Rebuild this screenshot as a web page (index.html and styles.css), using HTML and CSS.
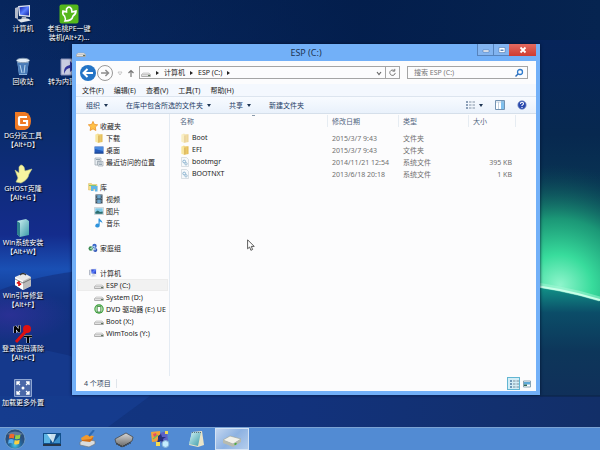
FILE: index.html
```html
<!DOCTYPE html>
<html lang="zh">
<head>
    <meta charset="UTF-8">
    <meta name="viewport" content="width=device-width, initial-scale=1.0">
    <title>ESP (C:)</title>
    <link rel="stylesheet" href="styles.css">
</head>
<body>
    <svg class="symbols" aria-hidden="true">
        <defs>
            <linearGradient id="gFolder" x1="0" x2="1"><stop offset="0" stop-color="#fdf0b0"/><stop offset="1" stop-color="#e2b84e"/></linearGradient>
            <linearGradient id="gScreen" x1="0" y1="0" x2="1" y2="1"><stop offset="0" stop-color="#0a18a8"/><stop offset=".5" stop-color="#5a80ff"/><stop offset="1" stop-color="#1020a0"/></linearGradient>
            <linearGradient id="gGlass" x1="0" y1="0" x2="1" y2="1"><stop offset="0" stop-color="#d5f5f5"/><stop offset="1" stop-color="#3a9aa8"/></linearGradient>
            <linearGradient id="gChip" x1="0" y1="0" x2="0" y2="1"><stop offset="0" stop-color="#d8d8d8"/><stop offset="1" stop-color="#666"/></linearGradient>
        </defs>
        <symbol id="drive" viewBox="0 0 10 10">
            <path d="M2 5h6l1.500 1.500v2h-9v-2z" fill="#e9e9e9" stroke="#a5a5a5" stroke-width=".5"/>
            <path d="M.6 6.500h8.800v2.200H.6z" fill="#999"/><path d="M1 6.800h6v1.300H1z" fill="#e2e2e2"/><path d="M7.300 6.900h1.500v1H7.300z" fill="#4c6b4c"/>
        </symbol>
        <symbol id="folder" viewBox="0 0 10 10">
            <path d="M1.500 1.500L4 .5l1 .8h3.500V9l-4 .7-3-1z" fill="url(#gFolder)"/>
            <path d="M1.500 1.500l3 1v7.200l-3-1z" fill="#f8e6a0"/><path d="M4.500 2.500h.8v7l-.8.200z" fill="#c99a38"/>
        </symbol>
        <symbol id="sysfile" viewBox="0 0 10 10">
            <path d="M1.500.5h5l2 2v7h-7z" fill="#f6f9fb" stroke="#c3ccd4" stroke-width=".6"/>
            <circle cx="4.200" cy="4.500" r="1.400" fill="none" stroke="#8cb4d2"/><circle cx="6" cy="6.800" r="1.200" fill="none" stroke="#9dbdd4"/>
        </symbol>
        <symbol id="star" viewBox="0 0 10 10"><path d="M5 .4l1.400 3 3.300.4-2.400 2.300.6 3.400L5 7.900 2.100 9.500l.6-3.400L.3 3.800l3.300-.4z" fill="#ffc148" stroke="#e88a1c" stroke-width=".7"/></symbol>
        <symbol id="desk" viewBox="0 0 10 10"><path d="M.5 1.500h9v7h-9z" fill="#2459b8"/><path d="M1 2h8v4L1 4z" fill="#4a8be0"/><path d="M.5 7.700h9v.8h-9z" fill="#163875"/></symbol>
        <symbol id="recent" viewBox="0 0 10 10"><path d="M1 1h6v3H3.500v4H1zM4 4.500h5V9H4z" fill="#e8edf1" stroke="#98a4ae" stroke-width=".7"/><path d="M2 2.500h4M5 6h3M5 7.500h3" stroke="#728796" stroke-width=".7"/></symbol>
        <symbol id="library" viewBox="0 0 10 10"><path d="M.5 1.500h3l.7 1H9v5.500H.5z" fill="#f6dc86" stroke="#d5b04c" stroke-width=".4"/><path d="M3 4h6.500v5.500H7V7H5.500v2H3z" fill="#62b5e8"/><path d="M1 3h7v1H1z" fill="#82c47a"/></symbol>
        <symbol id="video" viewBox="0 0 10 10"><path d="M1.500.5h7v9h-7z" fill="#2d3e4c"/><path d="M3.200 1h3.600v3.500H3.200zM3.200 5.500h3.600V9H3.200z" fill="#6ca5cc"/><path d="M2.300 1v8.500M7.700 1v8.500" stroke="#c3d1da" stroke-width=".7" stroke-dasharray=".8 .8"/></symbol>
        <symbol id="photo" viewBox="0 0 10 10"><path d="M.5 1.500h9v7h-9z" fill="#eef3f5" stroke="#aab6bd" stroke-width=".5"/><path d="M1.300 2.300h7.400v5.400H1.300z" fill="#7fc8e6"/><path d="M1.300 6l2.500-1.500L6 6l2.700-.5v2.200H1.300z" fill="#2f6c6c"/></symbol>
        <symbol id="music" viewBox="0 0 10 10"><path d="M4.500.5h1.200c.3 1.700 3 2 2.600 5-.6-1.500-1.500-1.800-2.600-1.900V7.500a2.200 2 0 1 1-1.200-1.700z" fill="#2e93dc"/></symbol>
        <symbol id="homegroup" viewBox="0 0 10 10"><circle cx="6.500" cy="3" r="2.200" fill="#3a66c8"/><circle cx="2.800" cy="5.500" r="2.300" fill="#3d8b54"/><circle cx="7.300" cy="7" r="2" fill="#3458b8"/><path d="M2.500 5.500l4-2.500.8 4z" fill="none" stroke="#dff" stroke-width=".7"/></symbol>
        <symbol id="pc" viewBox="0 0 20 20">
            <path d="M2 4l3-1v12l-3-1z" fill="#b3bac8"/><path d="M5 2l12-1v12L6 12z" fill="#dfe4ee"/>
            <path d="M6.500 3.200L16 2.300v9.300l-8.800-.8z" fill="url(#gScreen)"/>
            <path d="M9 13h4l1 2.500H8z" fill="#aeb4c0"/><path d="M4 15.500l11-1 3 2-10 2z" fill="#e2e6ec"/>
        </symbol>
        <symbol id="dvd" viewBox="0 0 10 10"><circle cx="5" cy="5" r="4.700" fill="#369c36"/><circle cx="5" cy="5" r="3.600" fill="#cdebc6"/><path d="M3.200 2.500h3.600v5.500H3.200z" fill="#fff" stroke="#2c7c30" stroke-width=".8"/></symbol>
    </svg>

    <main class="desktop">
        <svg class="wallpaper" viewBox="0 0 600 427" preserveAspectRatio="none" aria-hidden="true">
            <defs>
                <linearGradient id="sky" x1="0" y1="0" x2="0" y2="1">
                    <stop offset="0" stop-color="#07265d"/><stop offset=".3" stop-color="#0a2c6c"/><stop offset=".55" stop-color="#142c8c"/><stop offset=".63" stop-color="#1a50b4"/><stop offset=".7" stop-color="#123a92"/><stop offset="1" stop-color="#123682"/>
                </linearGradient>
                <linearGradient id="dusk" x1="0" x2="1" y1="0" y2="0"><stop offset="0" stop-color="#021c48" stop-opacity="0"/><stop offset=".6" stop-color="#021c48" stop-opacity=".8"/><stop offset="1" stop-color="#062450"/></linearGradient>
                <linearGradient id="night" x1="0" y1="0" x2="0" y2="1">
                    <stop offset="0" stop-color="#06245a"/><stop offset=".35" stop-color="#07284f"/><stop offset=".65" stop-color="#0a3a56"/><stop offset="1" stop-color="#0e5c62"/>
                </linearGradient>
                <radialGradient id="aurora"><stop offset="0" stop-color="#8ff5cc"/><stop offset=".25" stop-color="#38dc9c"/><stop offset=".55" stop-color="#1ea77c" stop-opacity=".85"/><stop offset="1" stop-color="#0a4954" stop-opacity="0"/></radialGradient>
                <linearGradient id="sea" x1="0" y1="0" x2="0" y2="1"><stop offset="0" stop-color="#12988a"/><stop offset=".25" stop-color="#0b4d68"/><stop offset=".6" stop-color="#0d365a"/><stop offset="1" stop-color="#10305a"/></linearGradient>
                <linearGradient id="floor" x1="0" x2="1" y1="0" y2="0"><stop offset="0" stop-color="#123682"/><stop offset=".5" stop-color="#12327c"/><stop offset="1" stop-color="#122f68"/></linearGradient>
                <radialGradient id="purple"><stop offset="0" stop-color="#3a30a0" stop-opacity=".6"/><stop offset="1" stop-color="#3a30a0" stop-opacity="0"/></radialGradient>
            </defs>
            <rect width="600" height="427" fill="url(#sky)"/>
            <rect width="600" height="60" fill="url(#dusk)"/>
            <rect x="520" y="40" width="80" height="270" fill="url(#night)"/>
            <ellipse cx="560" cy="285" rx="130" ry="120" transform="rotate(18 560 285)" fill="url(#aurora)"/>
            <path d="M520 285q40 4 80 16v95h-80z" fill="url(#sea)"/>
            <path d="M520 283q40 4 80 16" fill="none" stroke="#a8f7d8" stroke-width="5" opacity=".5"/>
            <path d="M520 284q40 4 80 16" fill="none" stroke="#c8ffe8" stroke-width="2"/>
            <path d="M0 290q40-16 90-20v157H0z" fill="#122a74" opacity=".5"/>
            <ellipse cx="10" cy="315" rx="60" ry="28" fill="url(#purple)"/>
            <path d="M0 396h600v31H0z" fill="url(#floor)"/>
            <path d="M0 350q70-10 150 46l-42 31H0z" fill="#174199" opacity=".5"/>
            <path d="M540 396h60" stroke="#0a2244"/>
        </svg>

        <div class="shortcuts">
            <button class="shortcut"><svg class="icon-large"><use href="#pc"/></svg><span>计算机</span></button>
            <button class="shortcut">
                <svg class="icon-large" viewBox="0 0 20 20"><path d="M4 3l12 0-2 15H6z" fill="#8db4dc"/><path d="M4.500 6l11 0-1.500 11H6z" fill="#4a7cb8"/><ellipse cx="10" cy="3.500" rx="6.500" ry="2.200" fill="#e4eef8" stroke="#8298b0"/><path d="M7 8l2 8M12 8l-1 8" stroke="#b8d5ef"/></svg>
                <span>回收站</span>
            </button>
            <button class="shortcut">
                <svg class="icon-large" viewBox="0 0 20 20"><path d="M2 1h10q6 2 6 9t-6 9H5q-3 0-3-3z" fill="#f07a24"/><path d="M14 6H7q-1 0-1 1v6q0 1 1 1h7v-4h-4" fill="none" stroke="#fff" stroke-width="2.200"/></svg>
                <span>DG分区工具<br>【Alt+D】</span>
            </button>
            <button class="shortcut">
                <svg class="icon-large" viewBox="0 0 20 20"><path d="M6 3q2-4 5 0l1 4 7-2-3 5q-1 6-8 9l-5-1 2-4-3-8 4 3z" fill="#f6f4a0" stroke="#c8cc80" stroke-width=".6"/></svg>
                <span>GHOST克隆<br>【Alt+G 】</span>
            </button>
            <button class="shortcut">
                <svg class="icon-large" viewBox="0 0 20 20"><path d="M4 3l9-2 3 2v14l-9 2-3-3z" fill="url(#gGlass)"/><path d="M4 3l3 2v14l-3-3z" fill="#2d7f8e"/></svg>
                <span>Win系统安装<br>【Alt+W】</span>
            </button>
            <button class="shortcut">
                <svg class="icon-large" viewBox="0 0 20 20"><path d="M2 6l9-4 7 4v9l-8 4-8-5z" fill="#e8e8e8"/><path d="M2 6l8 4v9l-8-5z" fill="#fff"/><path d="M10 10l8-4v9l-8 4z" fill="#bbb"/><path d="M7 4q3-3 6 0" fill="none" stroke="#333" stroke-width="1.200"/><path d="M6 10v5M3.800 11.500l4.400 2" stroke="#e01818" stroke-width="1.800"/><path d="M2 8l8 4 8-4" fill="none" stroke="#555" stroke-width=".7"/></svg>
                <span>Win引导修复<br>【Alt+F】</span>
            </button>
            <button class="shortcut">
                <svg class="icon-large" viewBox="0 0 20 20"><path d="M3 18L13 7" stroke="#e01010" stroke-width="3"/><circle cx="14" cy="5" r="4" fill="#e01010"/><path d="M2 9V2.500L6.500 8V1.500M11 12.500h8M15 12.500V19" fill="none" stroke="#fff" stroke-width="3" stroke-linejoin="bevel"/><path d="M2 9V2.500L6.500 8V1.500M11 12.500h8M15 12.500V19" fill="none" stroke="#000" stroke-width="2" stroke-linejoin="bevel"/></svg>
                <span>登录密码清除<br>【Alt+C】</span>
            </button>
            <button class="shortcut">
                <svg class="icon-large" viewBox="0 0 20 20"><path d="M1.500 1.500h17v17h-17z" fill="#4a68a8" stroke="#8ea6d2"/><path d="M4 7V4h3M13 4h3v3M16 13v3h-3M7 16H4v-3M4 4l3 3M16 4l-3 3M16 16l-3-3M4 16l3-3" fill="none" stroke="#fff" stroke-width="1.300"/><circle cx="10" cy="10" r="1.500" fill="#fff"/></svg>
                <span>加载更多外置</span>
            </button>
            <button class="shortcut">
                <svg class="icon-large" viewBox="0 0 20 20"><rect x=".5" y=".5" width="19" height="19" rx="2" fill="#55b81c"/><path d="M7.500 5q2.500-4 5 0l.5 3 4-1q0 3-3 5-1 5-8 5 1-2-.5-5Q3 10 4 7l3.500 1z" fill="none" stroke="#fff" stroke-width="1.600"/></svg>
                <span>老毛桃PE一键<br>装机(Alt+Z)...</span>
            </button>
            <button class="shortcut">
                <svg class="icon-large" viewBox="0 0 20 20"><path d="M2 2h16v16H2z" fill="#c8cce0" stroke="#8890b8"/><path d="M5 17q-1-8 6-9V4l6 6-6 5v-4q-4 0-6 6z" fill="#30349a"/></svg>
                <span>转为内置模式</span>
            </button>
        </div>

        <section class="window">
            <header class="titlebar">
                <svg class="icon title-icon"><use href="#drive"/></svg>
                <h1>ESP (C:)</h1>
                <div class="caption-buttons">
                    <button class="caption" aria-label="最小化"><svg viewBox="0 0 8 8"><path d="M1 4h6v2H1z" fill="#fff" stroke="#446a9c" stroke-width=".5"/></svg></button>
                    <button class="caption" aria-label="最大化"><svg viewBox="0 0 8 8"><path d="M1 1.500h6v5H1z" fill="#fff" stroke="#446a9c" stroke-width=".5"/><path d="M2.500 3.500h3v1.500h-3z" fill="#5b86bd"/></svg></button>
                    <button class="caption close" aria-label="关闭"><svg viewBox="0 0 8 8"><path d="M1.500 1.500l5 5M6.500 1.500l-5 5" stroke="#fff" stroke-width="1.800"/></svg></button>
                </div>
            </header>

            <div class="client">
                <div class="navbar">
                    <button class="back" aria-label="后退"><svg viewBox="0 0 16 16"><path d="M13 8H4M7.500 4L3.500 8l4 4" fill="none" stroke="#fff" stroke-width="2"/></svg></button>
                    <button class="forward" aria-label="前进"><svg viewBox="0 0 16 16"><path d="M3.500 8h8M8.500 4.500L12 8l-3.500 3.500" fill="none" stroke="#8c8c8c" stroke-width="1.700"/></svg></button>
                    <button class="recent" aria-label="最近"><svg viewBox="0 0 8 8"><path d="M2 3h4L4 6z" fill="none" stroke="#b8b8b8" stroke-width=".7"/></svg></button>
                    <button class="up" aria-label="上移"><svg viewBox="0 0 8 8"><path d="M4 8V1.500M1.500 4L4 1.500 6.500 4" fill="none" stroke="#777" stroke-width="1.200"/></svg></button>
                    <div class="address">
                        <svg class="icon"><use href="#drive"/></svg>
                        <span class="arrow right"></span>
                        <a href="#computer">计算机</a>
                        <span class="arrow right"></span>
                        <a href="#c">ESP (C:)</a>
                        <span class="arrow right"></span>
                        <button class="history" aria-label="历史"><svg viewBox="0 0 8 8"><path d="M2 3l2 2.500L6 3" fill="none" stroke="#666" stroke-width="1.200"/></svg></button>
                        <button class="refresh" aria-label="刷新"><svg viewBox="0 0 10 10"><path d="M7 3a3 3 0 1 0 1 2.500M7.500 1v2.500H5" fill="none" stroke="#777" stroke-width="1.100"/></svg></button>
                    </div>
                    <label class="search">
                        <input type="search" placeholder="搜索 ESP (C:)" aria-label="搜索 ESP (C:)">
                        <svg class="icon" viewBox="0 0 10 10"><circle cx="6" cy="4" r="2.500" fill="none" stroke="#2e7acc" stroke-width="1.300"/><path d="M4 6L1.500 8.500" stroke="#2e6cb8" stroke-width="1.500"/></svg>
                    </label>
                </div>

                <div class="menubar">
                    <button>文件(F)</button>
                    <button>编辑(E)</button>
                    <button>查看(V)</button>
                    <button>工具(T)</button>
                    <button>帮助(H)</button>
                </div>

                <div class="toolbar">
                    <button>组织<span class="arrow down"></span></button>
                    <button>在库中包含所选的文件夹<span class="arrow down"></span></button>
                    <button>共享<span class="arrow down"></span></button>
                    <button>新建文件夹</button>
                    <div class="view-tools">
                        <button aria-label="更改视图"><svg class="icon" viewBox="0 0 10 10"><path d="M1 1h2v2H1zM1 4h2v2H1zM1 7h2v2H1z" fill="#8ca0b8"/><path d="M4 2h2.500M7.500 2H10M4 5h2.500M7.500 5H10M4 8h2.500M7.500 8H10" stroke="#8292a4"/></svg><span class="arrow down"></span></button>
                        <button aria-label="预览窗格"><svg class="icon" viewBox="0 0 10 10"><path d="M.5.5h9v9h-9z" fill="#fff" stroke="#7393b2"/><path d="M6 1h3v8H6z" fill="#7fc0ee"/><path d="M1 2h8M3.500 2v7" stroke="#a9bfd4" stroke-width=".7"/></svg></button>
                        <button aria-label="帮助"><svg class="icon" viewBox="0 0 10 10"><circle cx="5" cy="5" r="4.200" fill="#2848ae" stroke="#8296c6" stroke-width=".7"/><path d="M3.500 4q0-1.700 1.500-1.700T6.500 3.700Q6.500 4.500 5 5.400v.6M5 6.900v1" fill="none" stroke="#fff" stroke-width="1.100"/></svg></button>
                    </div>
                </div>

                <div class="panes">
                    <nav class="tree">
                        <ul>
                            <li><a href="#fav"><svg class="icon"><use href="#star"/></svg>收藏夹</a></li>
                            <li><a class="child" href="#down"><svg class="icon"><use href="#folder"/></svg>下载</a></li>
                            <li><a class="child" href="#desk-place"><svg class="icon"><use href="#desk"/></svg>桌面</a></li>
                            <li><a class="child" href="#places"><svg class="icon"><use href="#recent"/></svg>最近访问的位置</a></li>
                        </ul>
                        <ul>
                            <li><a href="#lib"><svg class="icon"><use href="#library"/></svg>库</a></li>
                            <li><a class="child" href="#videos"><svg class="icon"><use href="#video"/></svg>视频</a></li>
                            <li><a class="child" href="#photos"><svg class="icon"><use href="#photo"/></svg>图片</a></li>
                            <li><a class="child" href="#songs"><svg class="icon"><use href="#music"/></svg>音乐</a></li>
                        </ul>
                        <ul>
                            <li><a href="#group"><svg class="icon"><use href="#homegroup"/></svg>家庭组</a></li>
                        </ul>
                        <ul>
                            <li><a href="#computer"><svg class="icon"><use href="#pc"/></svg>计算机</a></li>
                            <li><a class="child selected" href="#c"><svg class="icon"><use href="#drive"/></svg>ESP (C:)</a></li>
                            <li><a class="child" href="#d"><svg class="icon"><use href="#drive"/></svg>System (D:)</a></li>
                            <li><a class="child" href="#e"><svg class="icon"><use href="#dvd"/></svg>DVD 驱动器 (E:) UE</a></li>
                            <li><a class="child" href="#x"><svg class="icon"><use href="#drive"/></svg>Boot (X:)</a></li>
                            <li><a class="child" href="#y"><svg class="icon"><use href="#drive"/></svg>WimTools (Y:)</a></li>
                        </ul>
                    </nav>

                    <div class="files">
                        <table>
                            <colgroup><col><col class="col-date"><col class="col-type"><col class="col-size"><col class="col-rest"></colgroup>
                            <thead>
                                <tr><th class="sorted">名称</th><th>修改日期</th><th>类型</th><th>大小</th><td></td></tr>
                            </thead>
                            <tbody>
                                <tr><td class="name"><svg class="icon faded"><use href="#folder"/></svg>Boot</td><td>2015/3/7 9:43</td><td>文件夹</td><td></td><td></td></tr>
                                <tr><td class="name"><svg class="icon"><use href="#folder"/></svg>EFI</td><td>2015/3/7 9:43</td><td>文件夹</td><td></td><td></td></tr>
                                <tr><td class="name"><svg class="icon"><use href="#sysfile"/></svg>bootmgr</td><td>2014/11/21 12:54</td><td>系统文件</td><td class="size">395 KB</td><td></td></tr>
                                <tr><td class="name"><svg class="icon"><use href="#sysfile"/></svg>BOOTNXT</td><td>2013/6/18 20:18</td><td>系统文件</td><td class="size">1 KB</td><td></td></tr>
                            </tbody>
                        </table>
                    </div>
                </div>

                <footer class="status">
                    <span class="count">4 个项目</span>
                    <button class="view active" aria-label="详细信息"><svg class="icon" viewBox="0 0 10 10"><path d="M1 2h2M1 5h2M1 8h2" stroke="#4f7aa0" stroke-width="1.500"/><path d="M4 2h2.500M7.500 2H10M4 5h2.500M7.500 5H10M4 8h2.500M7.500 8H10" stroke="#7b8d99"/></svg></button>
                    <button class="view" aria-label="大图标"><svg class="icon" viewBox="0 0 10 10"><path d="M1.500 2h7v6h-7z" fill="#fff" stroke="#8ba5b4"/><path d="M2 3h6v2.500H2z" fill="#5ea9d8"/><path d="M2 5.500h3v1.500H2z" fill="#2e6a5c"/></svg></button>
                </footer>
            </div>
        </section>

        <svg class="cursor" viewBox="0 0 8 12" aria-hidden="true"><path d="M.6.800v9l2-1.800 1.300 3.300 1.700-.8L4.300 7.400h2.900z" fill="#fff" stroke="#333" stroke-width=".8"/></svg>
    </main>

    <footer class="taskbar">
        <button class="start" aria-label="开始">
            <svg viewBox="0 0 22 22"><defs><radialGradient id="orb" cy=".8"><stop offset="0" stop-color="#45c8e8"/><stop offset=".6" stop-color="#24659c"/><stop offset="1" stop-color="#2b4f7c"/></radialGradient></defs><circle cx="11" cy="11" r="10" fill="url(#orb)" stroke="#7ba6c8" stroke-width=".7"/><path d="M3 6q8-5 16 0-8 3-16 0z" fill="#fff" opacity=".25"/><path d="M5.500 6.500q2.500-1.500 5 0l-.6 4q-2.500-1.200-5 0z" fill="#f06a2c"/><path d="M11.500 6.800q2.500 1.200 5-.3l-.6 4q-2.500 1.500-5 .3z" fill="#93d048"/><path d="M4.700 11.700q2.500-1.300 5 0l-.6 4q-2.500-1.300-5 0z" fill="#55aef0"/><path d="M10.700 12q2.500 1.300 5-.2l-.6 4q-2.500 1.500-5 .2z" fill="#fcd040"/></svg>
        </button>
        <button class="task" aria-label="显示桌面"><svg viewBox="0 0 20 18"><path d="M1 3h18v11H1z" fill="#12508c"/><path d="M2 4h7l-1 9H2z" fill="#5cb4e4"/><path d="M5 4l6 9 3-9z" fill="#e9f8ff" opacity=".85"/><path d="M12 12l6-7v8h-6z" fill="#3c90cc"/><path d="M1 14h18v2H1z" fill="#26364a"/></svg></button>
        <button class="task" aria-label="磁盘清理"><svg viewBox="0 0 20 18"><path d="M2 12l5-3 10 2v3l-6 3-9-2z" fill="#d9dcde" stroke="#74787c" stroke-width=".7"/><path d="M3 8l5-3 8 1-3 4-9 1z" fill="#f09a30"/><path d="M4 10l9-1 2-2v2l-3 3-8-1z" fill="#d06e18"/><path d="M11 6l5-6" stroke="#2c6ab4" stroke-width="2"/></svg></button>
        <button class="task" aria-label="内存"><svg viewBox="0 0 20 18"><path d="M1 9l11-6 7 4-1 4-10 6-6-4z" fill="url(#gChip)" stroke="#3d3d3d" stroke-width=".7"/><path d="M3 13v2M5 14v2M7 15v2M10 15v2M12 14v2M14 13v2M16 12v2" stroke="#333"/></svg></button>
        <button class="task" aria-label="工具"><svg viewBox="0 0 20 18"><path d="M1 2l9-1 1 10-9 1z" fill="#f4a23a"/><path d="M3 4l3-1 1 3-3 1z" fill="#e34f64"/><path d="M10 3l7-2 1 10-7 2z" fill="#5a62c4"/><path d="M8 6l3-2 1 3 4 0-3 2 1 4-3-2-4 2 1-4z" fill="#28307c"/><path d="M6 12h4v4H6zM15 1h3v3h-3z" fill="#f7dc50"/><circle cx="15.500" cy="14" r="3.400" fill="#c5edff" stroke="#8ab4d6"/><path d="M3 9l5-4" stroke="#6fc05a" stroke-width="1.500"/></svg></button>
        <button class="task" aria-label="记事本"><svg viewBox="0 0 20 18"><path d="M6 2l10-1 2 14-6 2-9-2z" fill="#e9e4c8"/><path d="M6 2l9 0-3 14-9-2z" fill="url(#gGlass)"/><path d="M6 2.500h9" stroke="#60737a" stroke-dasharray="1 1"/></svg></button>
        <button class="task active" aria-label="ESP (C:)"><svg viewBox="0 0 20 18"><path d="M1 10l7-4 11 3-8 5z" fill="#f1f1ea" stroke="#a0a394" stroke-width=".6"/><path d="M1 10l10 4v3L1 13zM11 14l8-5v3l-8 5z" fill="#b7bbaf"/><path d="M12.500 14.500l2-1.200" stroke="#3faa38" stroke-width="1.500"/></svg></button>
    </footer>
</body>
</html>
```

FILE: styles.css
```css
* {
    box-sizing: border-box;
}
body {
    margin: 0;
    height: 100vh;
    display: flex;
    flex-direction: column;
    overflow: hidden;
    font-family: "Noto Sans", "Noto Sans CJK SC", sans-serif;
    font-size: 7px;
    line-height: 9px;
    color: #222;
}
button, input {
    font: inherit;
    color: inherit;
    background: none;
    border: none;
    padding: 0;
    margin: 0;
}
button svg {
    display: block;
}
a {
    color: inherit;
    text-decoration: none;
}
.symbols {
    position: absolute;
    width: 0;
    height: 0;
}
.icon {
    width: 10px;
    height: 10px;
    flex: none;
}
.icon-large {
    width: 20px;
    height: 20px;
}

/* desktop */
.desktop {
    position: relative;
    flex: 1;
    min-height: 0;
    background: #0b2c6c;
}
.wallpaper {
    position: absolute;
    width: 100%;
    height: 100%;
}
.shortcuts {
    position: relative;
    height: 100%;
    display: grid;
    grid-template-rows: repeat(8, 1fr);
    grid-auto-flow: column;
    grid-auto-columns: 46px;
}
.shortcut {
    display: flex;
    flex-direction: column;
    align-items: center;
    padding-top: 4px;
    color: #fff;
    white-space: nowrap;
    text-shadow: 1px 1px 1px #000;
}

/* explorer window */
.window {
    position: absolute;
    top: 44px;
    right: 60px;
    bottom: 32px;
    left: 72px;
    display: flex;
    flex-direction: column;
    padding: 0 4px 4px;
    background: #72b0f8;
    box-shadow: 0 0 3px #02102e;
}
.titlebar {
    display: grid;
    grid-template-columns: 1fr auto 1fr;
    height: 17px;
    align-items: center;
}
.titlebar h1 {
    margin: 0;
    font-size: 9px;
    font-weight: normal;
    line-height: 16px;
    color: #1c3453;
}
.caption-buttons {
    display: flex;
    justify-self: end;
    align-self: start;
}
.caption {
    width: 16px;
    height: 12px;
    display: grid;
    place-items: center;
    border: 1px solid #5683bc;
    border-top: none;
    border-right: none;
    background: #82b4f0;
}
.caption svg {
    width: 8px;
    height: 8px;
}
.caption.close {
    width: 27px;
    border: none;
    background: linear-gradient(#e26a60, #cf3b31);
}
.client {
    flex: 1;
    min-height: 0;
    display: flex;
    flex-direction: column;
    background: #fcfcfd;
}
.navbar {
    display: flex;
    align-items: center;
    height: 23px;
    padding: 0 8px 0 4px;
}
.back, .forward {
    width: 16px;
    height: 16px;
    border-radius: 50%;
}
.back {
    background: #2374c6;
}
.forward {
    margin-left: 1px;
    border: 1px solid #999;
}
.recent, .up {
    width: 8px;
    margin-left: 3px;
}
.address {
    flex: 1;
    display: flex;
    align-items: center;
    gap: 5px;
    height: 13px;
    margin-left: 4px;
    padding-left: 1px;
    border: 1px solid #a5a5a5;
}
.arrow {
    width: 0;
    height: 0;
    border: 2px solid transparent;
}
.arrow.right {
    border-left: 3px solid #222;
    border-right: 0;
}
.arrow.down {
    border-top: 3px solid #1e3553;
    border-bottom: 0;
}
.history {
    width: 8px;
    margin-left: auto;
    margin-right: -3px;
}
.refresh {
    width: 14px;
    height: 11px;
    padding: 1px 2px;
    border-left: 1px solid #a5a5a5;
}
.refresh svg {
    width: 9px;
    height: 9px;
}
.search {
    flex: 0 1 119px;
    display: flex;
    align-items: center;
    height: 13px;
    margin-left: 7px;
    padding: 0 3px 0 6px;
    border: 1px solid #a5a5a5;
}
.search input {
    flex: 1;
    min-width: 0;
    outline: none;
}
.search input::placeholder {
    color: #777;
}
.menubar {
    display: flex;
    gap: 10px;
    height: 12px;
    padding-left: 6px;
    background: #f4f8fe;
}
.toolbar {
    display: flex;
    gap: 18px;
    height: 18px;
    padding: 0 9px 0 10px;
    border-top: 1px solid #dde5ef;
    border-bottom: 1px solid #d5dfea;
    background: linear-gradient(#f8fbff, #e9f1fb);
    color: #1e3d66;
}
.toolbar button {
    display: flex;
    align-items: center;
    gap: 4px;
}
.view-tools {
    display: flex;
    gap: 12px;
    margin-left: auto;
}
.panes {
    flex: 1;
    min-height: 0;
    display: flex;
}
.tree {
    flex: 0 0 94px;
    overflow: hidden;
    padding: 6px 1px 0;
    border-right: 1px solid #e4ebf3;
}
.tree ul {
    list-style: none;
    margin: 0 0 13px;
    padding: 0;
}
.tree a {
    display: flex;
    align-items: center;
    gap: 2px;
    height: 12px;
    padding-left: 11px;
    white-space: nowrap;
    overflow: hidden;
}
.tree a.child {
    padding-left: 17px;
}
.tree a.selected {
    background: #f2f2f2;
    outline: 1px solid #ececec;
    outline-offset: -1px;
}
.files {
    flex: 1;
    min-width: 0;
}
.files table {
    width: 100%;
    table-layout: fixed;
    border-collapse: collapse;
    color: #707070;
}
.col-date {
    width: 71px;
}
.col-type {
    width: 70px;
}
.col-size {
    width: 47px;
}
.col-rest {
    width: 20px;
}
.files th {
    height: 18px;
    padding: 0 0 3px 4px;
    font-weight: normal;
    text-align: left;
    color: #52667f;
    background: linear-gradient(#e6ecf2, #e6ecf2) right 1px / 1px 12px no-repeat;
}
.files th.sorted {
    padding-left: 10px;
    background:
        linear-gradient(#8a9bac, #8a9bac) 82px 1px / 3px 1px no-repeat,
        linear-gradient(#e6ecf2, #e6ecf2) right 1px / 1px 12px no-repeat;
}
.files td {
    height: 12px;
    padding: 0 4px;
    white-space: nowrap;
}
.files td.name {
    padding-left: 10px;
    color: #222;
}
.name .icon {
    margin-right: 2px;
    vertical-align: middle;
}
.faded {
    opacity: .6;
}
.files td.size {
    text-align: right;
}
.status {
    display: flex;
    align-items: center;
    height: 15px;
    padding: 0 3px 0 8px;
    color: #34455c;
}
.count {
    margin-right: auto;
    padding-right: 5px;
    border-right: 1px solid #e0e5eb;
}
.view {
    width: 13px;
    height: 13px;
    display: grid;
    place-items: center;
}
.view.active {
    border: 1px solid #62b6d2;
    background: #d3edf6;
}
.cursor {
    position: absolute;
    left: 247px;
    top: 239px;
    width: 8px;
    height: 12px;
}

/* taskbar */
.taskbar {
    display: flex;
    gap: 2px;
    height: 23px;
    border-top: 1px solid #7ba3d4;
    background: #528bd3;
}
.start {
    width: 33px;
    padding-left: 4px;
}
.start svg {
    width: 22px;
    height: 22px;
}
.task {
    width: 34px;
    display: grid;
    place-items: center;
}
.task svg {
    width: 20px;
    height: 18px;
}
.task.active {
    border: 1px solid #d3e2f4;
    background: linear-gradient(135deg, #c3d6ef, #8db2e2 50%, #b4cdec);
}
```
